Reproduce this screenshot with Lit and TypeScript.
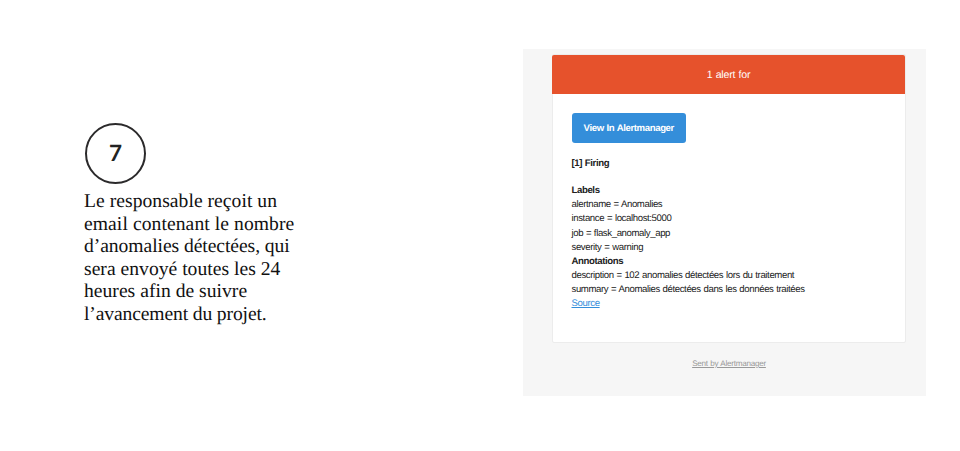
import { LitElement, html, css } from "lit";
import { customElement } from "lit/decorators.js";

const STEP_LINES: [string, number][] = [
  ["Le responsable reçoit un", 0.04],
  ["email contenant le nombre", 0.08],
  ["d’anomalies détectées, qui", -0.06],
  ["sera envoyé toutes les 24", 0.02],
  ["heures afin de suivre", 0.02],
  ["l’avancement du projet.", -0.13],
];

@customElement("step-note")
class StepNote extends LitElement {
  static styles = css`
    :host { display: block; text-rendering: geometricPrecision; }
    .ring {
      box-sizing: border-box;
      width: 61px;
      height: 61px;
      margin-left: 1px;
      border: 2px solid #2b2a2b;
      border-radius: 50%;
      display: flex;
      align-items: center;
      justify-content: center;
      font: 700 22.5px/30px Lato, "Open Sans", sans-serif;
      color: #222;
    }
    .text {
      margin-top: 7.5px;
      font: 19.6px/22.6px "Liberation Serif", serif;
      color: #111;
      white-space: nowrap;
    }
    .line { display: block; }
  `;
  render() {
    return html`
      <div class="ring">7</div>
      <div class="text">
        ${STEP_LINES.map(([t, s]) => html`<span class="line" style="letter-spacing:${s}px">${t}</span>`)}
      </div>
    `;
  }
}

@customElement("alert-mail")
class AlertMail extends LitElement {
  static styles = css`
    :host {
      display: block;
      box-sizing: border-box;
      width: 403px;
      height: 347px;
      padding: 5px 20px 0 29px;
      background: #f6f6f6;
      font: 9.6px/14.15px "Liberation Sans", Arial, sans-serif;
      letter-spacing: -0.38px;
      word-spacing: 0.45px;
      color: #212121;
      text-rendering: geometricPrecision;
    }
    .card {
      box-sizing: border-box;
      height: 289px;
      border: 1px solid #ececec;
      border-radius: 2px;
      background: #fff;
    }
    .head {
      margin: 0 0 0 -1px;
      height: 39px;
      border-radius: 2px 2px 0 0;
      background: #e6522c;
      color: #fff;
      font-size: 10.6px;
      letter-spacing: -0.2px;
      line-height: 40px;
      text-align: center;
    }
    .body { padding: 19px 18.5px; white-space: nowrap; }
    .button {
      display: block;
      width: 114.5px;
      height: 30px;
      border-radius: 3px;
      background: #348eda;
      color: #fff;
      font-weight: 700;
      line-height: 31.5px;
      text-align: center;
      text-decoration: none;
    }
    .firing { margin: 13.9px 0 13px; font-weight: 700; }
    .row { display: block; }
    .row.strong { font-weight: 700; }
    .source { color: #348eda; }
    .foot { margin-top: 14px; text-align: center; font-size: 8.1px; letter-spacing: -0.25px; }
    .foot a { color: #999; }
  `;
  render() {
    return html`
      <div class="card">
        <div class="head">1 alert for</div>
        <div class="body">
          <a class="button" href="#">View In Alertmanager</a>
          <div class="firing">[1] Firing</div>
          <span class="row strong">Labels</span>
          <span class="row">alertname = Anomalies</span>
          <span class="row">instance = localhost:5000</span>
          <span class="row">job = flask_anomaly_app</span>
          <span class="row">severity = warning</span>
          <span class="row strong">Annotations</span>
          <span class="row">description = 102 anomalies détectées lors du traitement</span>
          <span class="row">summary = Anomalies détectées dans les données traitées</span>
          <a class="source" href="#">Source</a>
        </div>
      </div>
      <div class="foot"><a href="#">Sent by Alertmanager</a></div>
    `;
  }
}

@customElement("app-root")
class AppRoot extends LitElement {
  static styles = css`
    :host {
      display: flex;
      box-sizing: border-box;
      justify-content: space-between;
      align-items: flex-start;
      width: 960px;
      height: 451px;
      padding: 49px 34px 0 84px;
      background: #fff;
      overflow: hidden;
    }
    .note { margin-top: 73.5px; }
  `;
  render() {
    return html`<step-note class="note"></step-note><alert-mail></alert-mail>`;
  }
}
